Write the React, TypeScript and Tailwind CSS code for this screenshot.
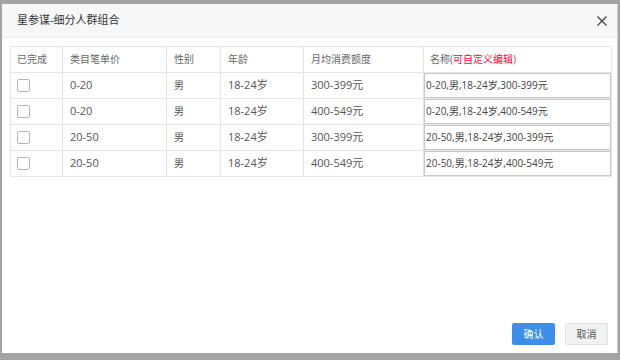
const rows = [
  { price: "0-20", sex: "男", age: "18-24岁", spend: "300-399元", name: "0-20,男,18-24岁,300-399元" },
  { price: "0-20", sex: "男", age: "18-24岁", spend: "400-549元", name: "0-20,男,18-24岁,400-549元" },
  { price: "20-50", sex: "男", age: "18-24岁", spend: "300-399元", name: "20-50,男,18-24岁,300-399元" },
  { price: "20-50", sex: "男", age: "18-24岁", spend: "400-549元", name: "20-50,男,18-24岁,400-549元" },
];

export default function App() {
  return (
    <div
      className="h-[360px] w-[620px] bg-[#a3a3a3] pl-[2px] pt-[4px]"
      style={{ fontFamily: '"Open Sans", "Noto Sans CJK SC", sans-serif' }}
    >
      <div className="flex h-[349px] w-[616px] flex-col border-r border-[#d0d0d0] bg-white">
        {/* 标题栏 */}
        <div className="flex h-[34px] items-center justify-between border-b border-[#ebebeb] bg-[#f7f7f7] pl-[15px] pr-[9px]">
          <span className="text-[11px] text-[#333]">星参谋-细分人群组合</span>
          <svg width="12" height="12" viewBox="0 0 12 12">
            <path d="M1.5 1.5 L10.5 10.5 M10.5 1.5 L1.5 10.5" stroke="#444" strokeWidth="1.4" />
          </svg>
        </div>

        {/* 表格 */}
        <div className="mx-[8px] mt-[8px]">
          <table className="w-[602px] border-collapse text-[11px] text-[#555]">
            <thead>
              <tr className="h-[26px] text-[10px] text-[#666]">
                <th className="w-[52px] border border-[#e6e6e6] pl-[6px] text-left font-normal">已完成</th>
                <th className="w-[104px] border border-[#e6e6e6] pl-[7px] text-left font-normal">类目笔单价</th>
                <th className="w-[54px] border border-[#e6e6e6] pl-[7px] text-left font-normal">性别</th>
                <th className="w-[83px] border border-[#e6e6e6] pl-[7px] text-left font-normal">年龄</th>
                <th className="w-[120px] border border-[#e6e6e6] pl-[7px] text-left font-normal">月均消费额度</th>
                <th className="border border-[#e6e6e6] pl-[6px] text-left font-normal">
                  名称(<span className="text-[#f03]">可自定义编辑</span>)
                </th>
              </tr>
            </thead>
            <tbody>
              {rows.map((r, i) => (
                <tr key={i} className="h-[26px]">
                  <td className="border border-[#e6e6e6] pl-[6px]">
                    <div className="h-[13px] w-[13px] rounded-[2px] border border-[#b5b5b5] bg-white" />
                  </td>
                  <td className="border border-[#e6e6e6] pl-[7px]">{r.price}</td>
                  <td className="border border-[#e6e6e6] pl-[7px] text-[10px]">{r.sex}</td>
                  <td className="border border-[#e6e6e6] pl-[7px]">{r.age}</td>
                  <td className="border border-[#e6e6e6] pl-[7px]">{r.spend}</td>
                  <td className="border border-[#e6e6e6] p-0">
                    <div className="flex h-[25px] items-center border border-[#c8c8c8] pl-[1px] text-[10px] text-[#444]">
                      {r.name}
                    </div>
                  </td>
                </tr>
              ))}
            </tbody>
          </table>
        </div>

        {/* 按钮 */}
        <div className="mt-auto mb-[8px] flex justify-end gap-[10px] pr-[9px]">
          <button className="h-[22px] w-[43px] rounded-[2px] bg-[#3c8ee8] text-[10px] text-white">确认</button>
          <button className="h-[22px] w-[43px] rounded-[2px] border border-[#e2e2e2] bg-[#f2f2f2] text-[10px] text-[#555]">
            取消
          </button>
        </div>
      </div>
    </div>
  );
}
